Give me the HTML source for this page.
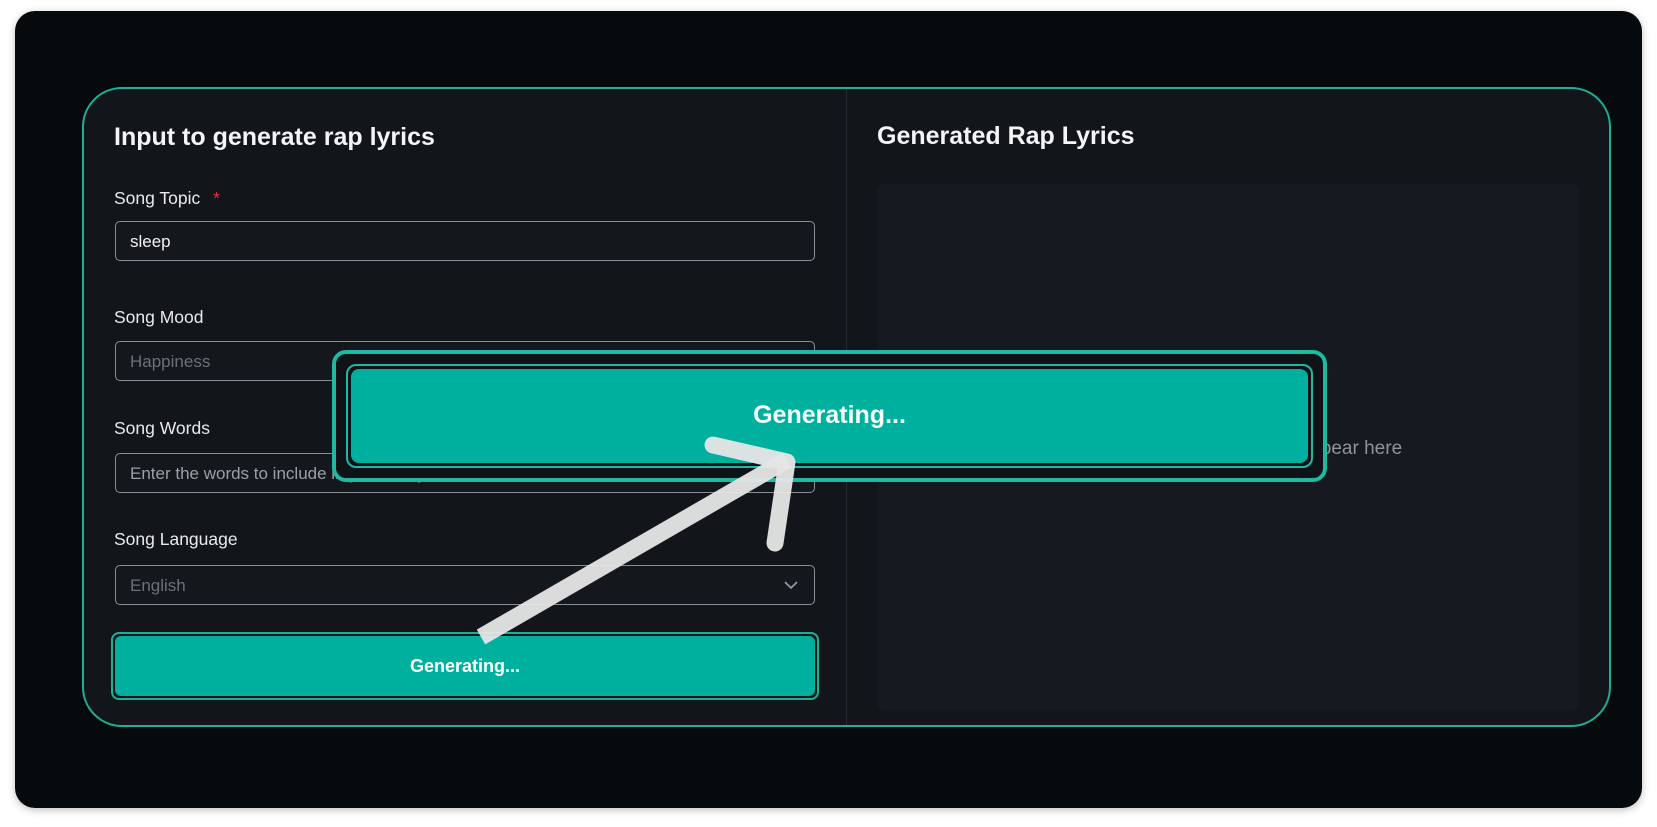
<!DOCTYPE html>
<html><head><meta charset="utf-8"><style>
*{box-sizing:border-box;margin:0;padding:0}
body{width:1657px;height:827px;background:#fff;position:relative;overflow:hidden;font-family:"Liberation Sans",sans-serif}
.card{position:absolute;left:15px;top:11px;width:1627px;height:797px;background:#070a0c;border-radius:20px;box-shadow:0 2px 8px rgba(0,0,0,.25)}
.panel{position:absolute;left:82px;top:87px;width:1529px;height:640px;background:#12161b;border:2px solid #1fae96;border-radius:40px}
.div{position:absolute;left:846px;top:89px;width:1px;height:636px;background:#262b32}
.t{position:absolute;color:#f2f4f5;font-weight:bold;font-size:25px}
.l{position:absolute;color:#e8eaec;font-size:17.5px;left:114px;font-weight:500}
.in{position:absolute;left:115px;width:700px;height:40px;border:1px solid #8a8f96;border-radius:5px;background:#14181d;color:#6c7178;font-size:17px;padding:10px 14px}
.btn{position:absolute;left:111px;top:632px;width:708px;height:68px;border:2px solid #1fae96;border-radius:8px;padding:2px}
.btn div{width:100%;height:100%;background:#00b09f;border-radius:6px;color:#fff;font-weight:bold;font-size:18px;text-align:center;line-height:60px}
.rbox{position:absolute;left:877px;top:184px;width:702px;height:526px;background:#161a20;border-radius:6px}
.ov{position:absolute;left:332px;top:350px;width:995px;height:132px;border:4px solid #1fb8a0;border-radius:14px;background:#0f1317;padding:10px}
.ov .b{width:100%;height:100%;border:2px solid #1fb8a0;border-radius:10px;padding:3px;background:#0f1317}
.ov .b div{width:100%;height:100%;background:#00b09f;border-radius:8px;color:#f6fffd;font-weight:bold;font-size:25px;text-align:center;line-height:92px}
</style></head><body>
<div class="card"></div>
<div class="panel"></div>
<div class="div"></div>
<div class="t" style="left:114px;top:123px">Input to generate rap lyrics</div>
<div class="t" style="left:877px;top:122px">Generated Rap Lyrics</div>
<div class="l" style="top:188px">Song Topic <span style="color:#e5333a;margin-left:8px">*</span></div>
<div class="in" style="top:221px;color:#f2f2f2">sleep</div>
<div class="l" style="top:307px">Song Mood</div>
<div class="in" style="top:341px">Happiness</div>
<div class="l" style="top:418px">Song Words</div>
<div class="in" style="top:453px;color:#9aa0a6">Enter the words to include in your song</div>
<div class="l" style="top:529px">Song Language</div>
<div class="in" style="top:565px">English<svg style="position:absolute;right:16px;top:15px" width="14" height="9" viewBox="0 0 14 9"><path d="M1 1l6 6 6-6" fill="none" stroke="#9aa0a6" stroke-width="1.6"/></svg></div>
<div class="btn"><div>Generating...</div></div>
<div class="rbox"></div>
<div style="position:absolute;left:1268px;top:438px;color:#8d939a;font-size:19px">will appear here</div>
<div class="ov"><div class="b"><div>Generating...</div></div></div>
<svg style="position:absolute;left:0;top:0" width="1657" height="827">
<g stroke="#e6e6e6" stroke-opacity=".95" stroke-width="17" stroke-linecap="round" fill="none">
<path d="M481 637L787 460" stroke-linecap="butt"/>
<path d="M713 445L787 462L775 543" stroke-linejoin="round"/>
</g></svg>
</body></html>
